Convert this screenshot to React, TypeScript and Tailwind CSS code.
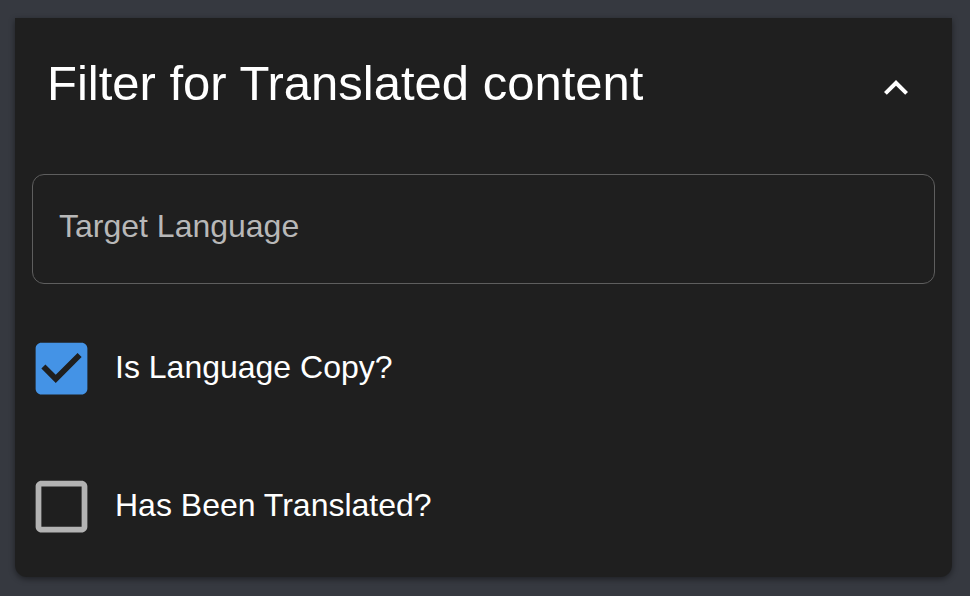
const CHECKED =
	'M19 3H5c-1.11 0-2 .9-2 2v14c0 1.1.89 2 2 2h14c1.11 0 2-.9 2-2V5c0-1.1-.89-2-2-2zm-9 14l-5-5 1.41-1.41L10 14.17l7.59-7.59L19 8l-9 9z';
const UNCHECKED =
	'M19 5v14H5V5h14m0-2H5c-1.1 0-2 .9-2 2v14c0 1.1.9 2 2 2h14c1.1 0 2-.9 2-2V5c0-1.1-.9-2-2-2z';

const options = [
	{ label: 'Is Language Copy?', checked: true },
	{ label: 'Has Been Translated?', checked: false },
];

const CheckRow = ({ label, checked }: { label: string; checked: boolean }) => {
	return (
		<label className="flex items-center gap-[19px]">
			<span className="relative -ml-[5px] h-[69px] w-[69px] shrink-0">
				{checked && (
					<span className="absolute left-[12px] top-[12px] h-[45px] w-[45px] bg-[#1f1f1f]" />
				)}
				<svg
					viewBox="0 0 24 24"
					className={
						'relative h-[69px] w-[69px] ' +
						(checked ? 'fill-[#4493e6]' : 'fill-[#b3b3b3]')
					}
				>
					<path d={checked ? CHECKED : UNCHECKED} />
				</svg>
			</span>
			<span className="-mt-[3px] text-[32px] leading-none text-white">{label}</span>
		</label>
	);
};

const App = () => {
	return (
		<div className="h-[596px] w-[970px] bg-[#363940] pl-[15px] pt-[18px] font-['Liberation_Sans',Arial,sans-serif]">
			<div className="h-[559px] w-[937px] rounded-b-[12px] bg-[#1f1f1f] px-[17px] pt-[41px] shadow-[0_2px_6px_rgba(0,0,0,0.45)]">
				<div className="flex h-[48px] items-start justify-between">
					<h2 className="ml-[15px] text-[49px] font-normal leading-none text-white">
						Filter for Translated content
					</h2>
					<svg
						viewBox="0 0 24 24"
						className="mr-[15px] mt-[5px] h-[48px] w-[48px] rotate-180 fill-white"
					>
						<path d="M16.59 8.59 12 13.17 7.41 8.59 6 10l6 6 6-6z" />
					</svg>
				</div>

				<div className="mt-[67px] flex h-[110px] items-center rounded-[12px] border-[1.5px] border-[#5e5e5e] px-[26px] pb-[7px]">
					<span className="text-[32px] leading-none text-[#b8b8b8]">Target Language</span>
				</div>

				<div className="mt-[50px] flex flex-col gap-[69px]">
					{options.map((o) => (
						<CheckRow key={o.label} label={o.label} checked={o.checked} />
					))}
				</div>
			</div>
		</div>
	);
};

export default App;
